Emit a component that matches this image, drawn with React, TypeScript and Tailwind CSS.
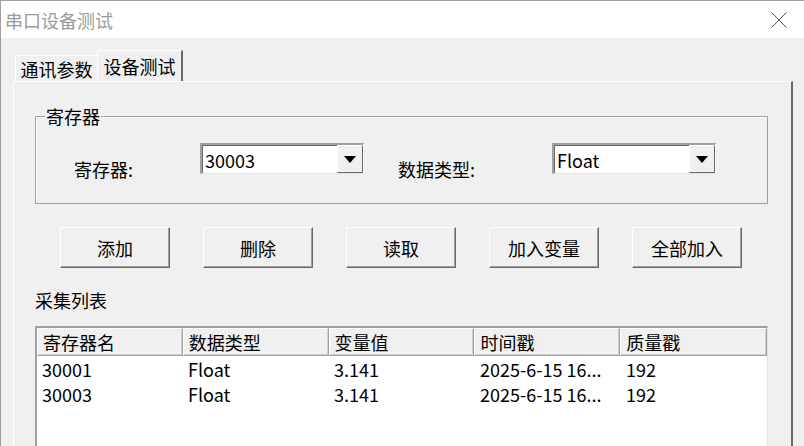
const font = "font-['Noto_Sans_CJK_SC','Noto_Sans',sans-serif]";

const buttons = ["添加", "删除", "读取", "加入变量", "全部加入"];
const columns = ["寄存器名", "数据类型", "变量值", "时间戳", "质量戳"];
const rows = [
  ["30001", "Float", "3.141", "2025-6-15 16...", "192"],
  ["30003", "Float", "3.141", "2025-6-15 16...", "192"],
];

function Combo({ value }: { value: string }) {
  return (
    <div className="flex h-[31px] w-[164px] border-l-2 border-t-2 border-r border-b border-l-[#a0a0a0] border-t-[#a0a0a0] border-r-white border-b-[#e3e3e3] bg-white">
      <div className="flex flex-1 items-center border-l border-t border-[#696969] pl-[2px] text-[18px] leading-[22px]">
        {value}
      </div>
      <div className="flex w-[26px] items-center justify-center border border-l-white border-t-white border-r-[#696969] border-b-[#696969] bg-[#f0f0f0]">
        <svg width="12" height="7" viewBox="0 0 12 7">
          <path d="M0 0h12L6 7z" fill="#000" />
        </svg>
      </div>
    </div>
  );
}

export default function App() {
  return (
    <div className={`${font} flex h-[446px] w-[804px] flex-col overflow-hidden border-l border-t border-[#a0a0a0] bg-[#f0f0f0] text-black`}>
      <div className="flex h-[37px] shrink-0 items-center justify-between bg-white pl-[4px] pr-[17px]">
        <span className="text-[18px] leading-[22px] text-[#9b9b9b]">串口设备测试</span>
        <svg width="16" height="16" viewBox="0 0 16 16">
          <path d="M0.5 0.5l15 15M15.5 0.5l-15 15" stroke="#555" strokeWidth="1" />
        </svg>
      </div>

      <div className="flex flex-1 flex-col pl-[12px] pr-[11px] pt-[12px]">
        <div className="flex h-[31px] items-end">
          <div className="ml-[2px] flex h-[26px] w-[82px] items-center justify-center border-l border-t border-white text-[18px] leading-[22px]">
            通讯参数
          </div>
          <div className="-mb-px flex h-[32px] w-[86px] items-center justify-center border-l border-t border-r-2 border-white border-r-[#696969] bg-[#f0f0f0] pb-[2px] text-[18px] leading-[22px]">
            设备测试
          </div>
        </div>

        <div className="flex flex-1 flex-col border-l border-t border-r-2 border-white border-r-[#696969] pl-[21px] pr-[23px]">
          <div className="relative mt-[34px] h-[88px] w-[733px] border border-[#a0a0a0] shadow-[inset_1px_1px_0_#fff]">
            <span className="absolute left-[9px] top-[-11px] bg-[#f0f0f0] px-[1px] text-[18px] leading-[20px]">寄存器</span>
            <div className="flex items-start pl-[38px] pt-[26px]">
              <span className="mt-[17px] w-[126px] text-[18px] leading-[18px]">寄存器:</span>
              <Combo value="30003" />
              <span className="ml-[34px] mt-[17px] w-[154px] text-[18px] leading-[18px]">数据类型:</span>
              <Combo value="Float" />
            </div>
          </div>

          <div className="ml-[25px] mt-[23px] flex gap-[33px]">
            {buttons.map((b) => (
              <div
                key={b}
                className="flex h-[41px] w-[110px] items-center justify-center border border-l-white border-t-white border-r-[#696969] border-b-[#696969] bg-[#f0f0f0] text-[18px] leading-[22px] shadow-[inset_-1px_-1px_0_#a0a0a0]"
              >
                {b}
              </div>
            ))}
          </div>

          <div className="mt-[21px] text-[18px] leading-[22px]">采集列表</div>

          <div className="mt-[15px] w-[733px] flex-1 border-l-2 border-t-2 border-r border-l-[#a0a0a0] border-t-[#a0a0a0] border-r-[#e3e3e3] bg-white">
            <div className="flex h-[28px]">
              {columns.map((c, i) => (
                <div
                  key={c}
                  className={`flex items-center border border-l-white border-t-white border-r-[#a0a0a0] border-b-[#a0a0a0] bg-[#f0f0f0] pl-[5px] text-[18px] leading-[22px] shadow-[inset_-1px_-1px_0_#d0d0d0] ${i === 4 ? "w-[147px]" : "w-[146px]"}`}
                >
                  {c}
                </div>
              ))}
            </div>
            <div>
              {rows.map((r, ri) => (
                <div key={ri} className="flex h-[25px] items-center">
                  {r.map((v, i) => (
                    <div key={i} className="w-[146px] pl-[5px] text-[18px] leading-[22px]">
                      {v}
                    </div>
                  ))}
                </div>
              ))}
            </div>
          </div>
        </div>
      </div>
    </div>
  );
}
